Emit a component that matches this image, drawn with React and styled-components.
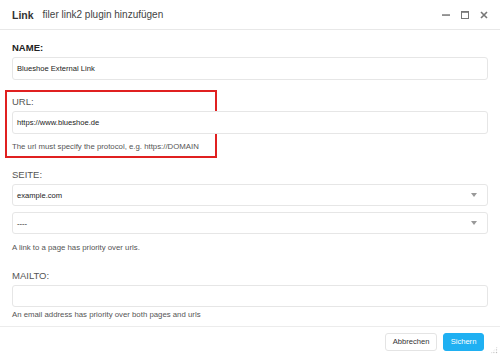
import styled, { createGlobalStyle } from 'styled-components'

const Global = createGlobalStyle`
  html, body {
    margin: 0;
    padding: 0;
    background: #fff;
  }
  * {
    box-sizing: border-box;
  }
`

const Fenster = styled.div`
  width: 500px;
  height: 356px;
  display: flex;
  flex-direction: column;
  font-family: "Liberation Sans", Arial, sans-serif;
  color: #333;
  background: #fff;
  overflow: hidden;
`

const Kopf = styled.header`
  height: 30px;
  display: flex;
  align-items: center;
  padding: 0 12px;
  border-bottom: 1px solid #e8e8e8;
  flex-shrink: 0;
`

const Titel = styled.h1`
  margin: 0;
  font-size: 10.5px;
  font-weight: bold;
  color: #333;
`

const Untertitel = styled.span`
  margin-left: 9px;
  font-size: 10px;
  color: #444;
  flex: 1;
`

const Steuerung = styled.div`
  display: flex;
  align-items: center;
  gap: 11px;
`

const Inhalt = styled.main`
  height: 297px;
  flex-shrink: 0;
  padding: 12px 12px 0 12px;
  display: flex;
  flex-direction: column;
  border-bottom: 1px solid #ececec;
  overflow: hidden;
`

const Feld = styled.div`
  display: flex;
  flex-direction: column;
  margin-top: ${p => p.$oben || 0}px;
`

const Beschriftung = styled.label`
  font-size: 9.5px;
  font-weight: ${p => p.$fett ? 'bold' : 'normal'};
  color: ${p => p.$fett ? '#222' : '#555'};
  margin: 0 0 3px 0;
  height: 12px;
  line-height: 12px;
`

const Eingabe = styled.div`
  height: ${p => p.$hoehe || 23}px;
  width: 476px;
  flex-shrink: 0;
  border: 1px solid #e6e6e6;
  border-radius: 3px;
  display: flex;
  align-items: center;
  padding: 0 4px;
  font-size: 7.6px;
  color: #222;
  background: #fff;
  margin-bottom: ${p => p.$unten || 0}px;
`

const Auswahl = styled(Eingabe)`
  justify-content: space-between;
  padding-right: 10px;
`

const Pfeil = styled.span`
  width: 0;
  height: 0;
  border-left: 3.5px solid transparent;
  border-right: 3.5px solid transparent;
  border-top: 4px solid #999;
`

const Hinweis = styled.p`
  margin: 0;
  font-size: 7.8px;
  color: #555;
  height: 11px;
  line-height: 11px;
  white-space: nowrap;
`

const Markierung = styled.div`
  margin: 10px 0 0 -7px;
  padding: 4px 5px 3px 5px;
  border: 2px solid #e02020;
  width: 212px;
  height: 68px;
  display: flex;
  flex-direction: column;
`

const Fuss = styled.footer`
  flex: 1;
  display: flex;
  justify-content: flex-end;
  align-items: center;
  gap: 6px;
  padding: 0 16px 0 0;
  position: relative;
`

const Knopf = styled.button`
  font-family: "Liberation Sans", Arial, sans-serif;
  font-size: 7.6px;
  height: 18px;
  width: ${p => p.$breite}px;
  padding: 0;
  border-radius: 3px;
  cursor: pointer;
  border: 1px solid ${p => p.$primaer ? '#1fb0f2' : '#e4e4e4'};
  background: ${p => p.$primaer ? '#1fb0f2' : '#fff'};
  color: ${p => p.$primaer ? '#fff' : '#333'};
`

const Griff = styled.span`
  position: absolute;
  right: 2px;
  bottom: 2px;
  width: 8px;
  height: 8px;
  background-image: radial-gradient(circle, #bbb 0.6px, transparent 0.9px);
  background-size: 2.6px 2.6px;
  clip-path: polygon(100% 0, 100% 100%, 0 100%);
`

const Minimieren = () => (
  <svg width="8" height="8" viewBox="0 0 8 8">
    <rect x="0" y="3.3" width="8" height="1.5" fill="#777" />
  </svg>
)

const Maximieren = () => (
  <svg width="8" height="8" viewBox="0 0 8 8">
    <rect x="0.5" y="0.5" width="7" height="7" fill="none" stroke="#777" strokeWidth="1" />
    <rect x="0" y="0" width="8" height="1.8" fill="#777" />
  </svg>
)

const Schliessen = () => (
  <svg width="8" height="8" viewBox="0 0 8 8">
    <path d="M1 1 L7 7 M7 1 L1 7" stroke="#777" strokeWidth="1.6" />
  </svg>
)

export default function App() {
  return (
    <>
      <Global />
      <Fenster>
        <Kopf>
          <Titel>Link</Titel>
          <Untertitel>filer link2 plugin hinzufügen</Untertitel>
          <Steuerung>
            <Minimieren />
            <Maximieren />
            <Schliessen />
          </Steuerung>
        </Kopf>

        <Inhalt>
          <Feld>
            <Beschriftung $fett>NAME:</Beschriftung>
            <Eingabe>Blueshoe External Link</Eingabe>
          </Feld>

          <Markierung>
            <Beschriftung>URL:</Beschriftung>
            <Eingabe $unten={7}>https://www.blueshoe.de</Eingabe>
            <Hinweis>The url must specify the protocol, e.g. https://DOMAIN</Hinweis>
          </Markierung>

          <Feld $oben={11}>
            <Beschriftung>SEITE:</Beschriftung>
            <Auswahl $hoehe={22} $unten={6}>example.com<Pfeil /></Auswahl>
            <Auswahl $hoehe={22} $unten={8}>----<Pfeil /></Auswahl>
            <Hinweis>A link to a page has priority over urls.</Hinweis>
          </Feld>

          <Feld $oben={17}>
            <Beschriftung>MAILTO:</Beschriftung>
            <Eingabe $hoehe={22} $unten={2} />
            <Hinweis>An email address has priority over both pages and urls</Hinweis>
          </Feld>
        </Inhalt>

        <Fuss>
          <Knopf $breite={52}>Abbrechen</Knopf>
          <Knopf $primaer $breite={41}>Sichern</Knopf>
          <Griff />
        </Fuss>
      </Fenster>
    </>
  )
}
